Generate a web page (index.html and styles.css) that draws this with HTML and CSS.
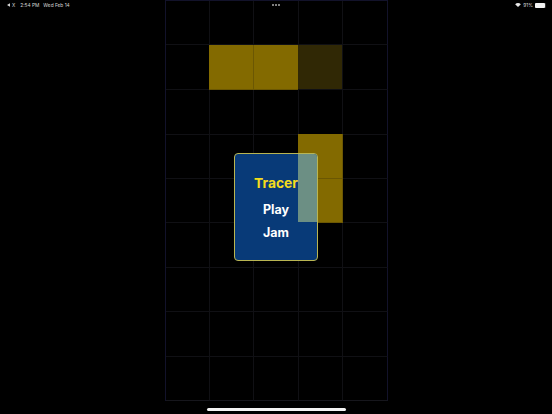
FILE: index.html
```html
<!DOCTYPE html>
<html lang="en">
<head>
    <meta charset="UTF-8">
    <title>Tracer</title>
    <link rel="stylesheet" href="styles.css">
</head>
<body>
    <div class="status-bar">
        <div class="status-left">
            <svg class="back-icon" viewBox="0 0 5 6"><path d="M0 3 5 0V6Z"/></svg>
            <span class="back-x">X</span>
            <span class="clock">2:54 PM</span>
            <span>Wed Feb 14</span>
        </div>
        <div class="status-right">
            <svg class="wifi-icon" viewBox="0 0 10 7"><path d="M5 7 0 2.2C2.8-.7 7.2-.7 10 2.2Z"/></svg>
            <span>91%</span>
            <div class="battery"><div class="battery-level"></div></div>
        </div>
    </div>
    <div class="dots"><i></i><i></i><i></i></div>

    <div class="board">
        <div class="cell"></div><div class="cell"></div><div class="cell"></div><div class="cell"></div><div class="cell"></div>
        <div class="cell"></div><div class="cell lit"></div><div class="cell lit"></div><div class="cell dim"></div><div class="cell"></div>
        <div class="cell"></div><div class="cell"></div><div class="cell"></div><div class="cell"></div><div class="cell"></div>
        <div class="cell"></div><div class="cell"></div><div class="cell"></div><div class="cell lit tall"></div><div class="cell"></div>
        <div class="cell"></div><div class="cell"></div><div class="cell"></div><div class="cell lit"></div><div class="cell"></div>
        <div class="cell"></div><div class="cell"></div><div class="cell"></div><div class="cell"></div><div class="cell"></div>
        <div class="cell"></div><div class="cell"></div><div class="cell"></div><div class="cell"></div><div class="cell"></div>
        <div class="cell"></div><div class="cell"></div><div class="cell"></div><div class="cell"></div><div class="cell"></div>
        <div class="cell"></div><div class="cell"></div><div class="cell"></div><div class="cell"></div><div class="cell"></div>

        <div class="menu">
            <div class="menu-overlap"></div>
            <h1>Tracer</h1>
            <a href="#">Play</a>
            <a href="#">Jam</a>
        </div>
    </div>

    <div class="home-bar"></div>
</body>
</html>
```

FILE: styles.css
```css
:root {
    --gold: #836a00;
    --gold-dim: #302805;
    --line: #101014;
    --edge: #12122a;
    --menu-blue: #083a78;
    --title: #f3dc1c;
}
html, body { height: 100%; }
body {
    margin: 0;
    width: 552px;
    height: 414px;
    overflow: hidden;
    position: relative;
    background: #000;
    color: white;
    font-family: Inter, 'Liberation Sans', sans-serif;
}

/* ipad status bar */
.status-bar {
    position: absolute;
    top: 0; left: 0; right: 0;
    height: 10px;
    padding: 0 6px 0 7px;
    display: flex;
    justify-content: space-between;
    align-items: center;
    font-size: 4.8px;
    color: #d8d8d8;
    z-index: 2;
}
.status-left, .status-right { display: flex; align-items: center; }
.back-icon { width: 3px; height: 4px; margin-right: 2px; fill: #d8d8d8; }
.back-x { margin-right: 5px; }
.clock { margin-right: 4px; }
.wifi-icon { width: 6px; height: 4px; margin-right: 2px; fill: #e8e8e8; }
.battery { width: 11px; height: 5px; margin-left: 2px; background: #333; border-radius: 1px; }
.battery-level { width: 91%; height: 100%; background: #f2f2f2; border-radius: 1px; }

.dots {
    position: absolute;
    top: 4px; left: 272px;
    display: flex;
    gap: 1px;
    z-index: 2;
}
.dots i { width: 2px; height: 2px; border-radius: 50%; background: #aaa; }

/* game board */
.board {
    position: absolute;
    top: 0; left: 165px;
    display: grid;
    grid-template-columns: 44px 44px 45px 44px 45px;
    grid-template-rows: 44px 45px 45px 44px 44px 45px 44px 45px 44px;
    border: solid var(--edge);
    border-width: 1px 0 0 1px;
}
.cell { border: solid var(--line); border-width: 0 1px 1px 0; }
.cell:nth-child(5n) { border-right-color: var(--edge); }
.cell:nth-child(n+41) { border-bottom-color: #16161c; }
.cell.lit { background: var(--gold); border-color: #6b5703; margin-left: -1px; }
.cell.lit + .cell.lit { margin-left: 0; }
.cell.dim { background: var(--gold-dim); margin-left: -1px; }
.cell.tall { margin-top: -1px; }

.menu {
    position: absolute;
    top: 152px; left: 68px;
    width: 84px;
    height: 108px;
    box-sizing: border-box;
    padding-top: 20px;
    display: flex;
    flex-direction: column;
    align-items: center;
    background: var(--menu-blue);
    border: 1px solid #b9b552;
    border-radius: 4px;
    overflow: hidden;
}
.menu h1 { position: relative; margin: 0 0 9px; font-size: 13.8px; line-height: 18px; font-weight: 700; color: var(--title); }
.menu a { position: relative; margin-bottom: 6px; font-size: 12.5px; line-height: 17px; font-weight: 700; color: white; text-decoration: none; }
.menu-overlap {
    position: absolute;
    top: 0; right: 0;
    width: 19px;
    height: 68px;
    background: #6c8f84;
}

.home-bar {
    position: absolute;
    left: 207px; bottom: 3px;
    width: 139px;
    height: 3px;
    border-radius: 2px;
    background: #f4f4f4;
}
```
